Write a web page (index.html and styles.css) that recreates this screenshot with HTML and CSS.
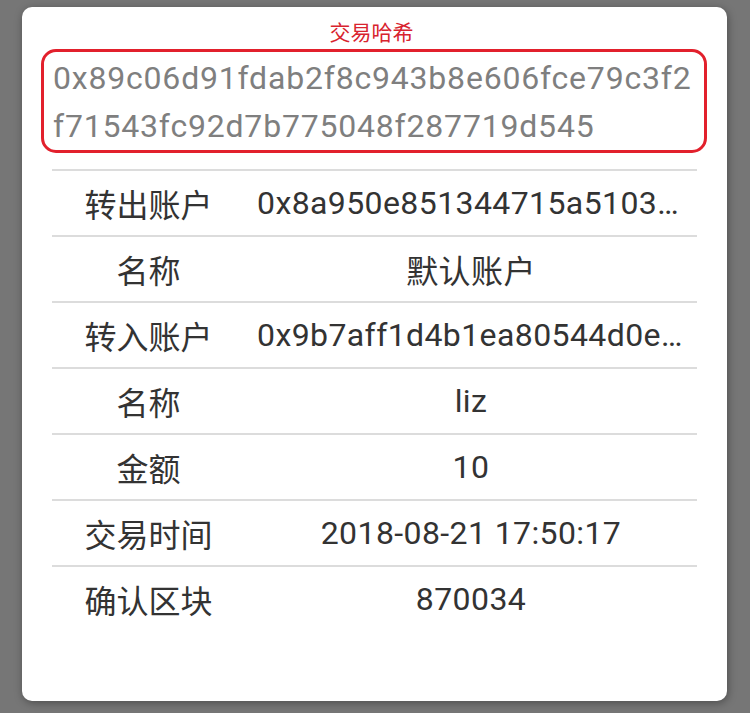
FILE: index.html
```html
<!DOCTYPE html>
<html lang="zh-CN">
<head>
<meta charset="utf-8">
<title>交易详情</title>
<link rel="stylesheet" href="styles.css">
</head>
<body>
<div class="card">
  <div class="title">交易哈希</div>
  <div class="hash">0x89c06d91fdab2f8c943b8e606fce79c3f2f71543fc92d7b775048f287719d545</div>
  <div class="rows">
    <div class="row"><div class="label">转出账户</div><div class="value">0x8a950e851344715a5103c4ff2a7e90b3e1d7c2a6</div></div>
    <div class="row"><div class="label">名称</div><div class="value">默认账户</div></div>
    <div class="row"><div class="label">转入账户</div><div class="value">0x9b7aff1d4b1ea80544d0e3c7a1f2b6d84e9a0c13</div></div>
    <div class="row"><div class="label">名称</div><div class="value">liz</div></div>
    <div class="row"><div class="label">金额</div><div class="value">10</div></div>
    <div class="row"><div class="label">交易时间</div><div class="value">2018-08-21 17:50:17</div></div>
    <div class="row"><div class="label">确认区块</div><div class="value">870034</div></div>
  </div>
</div>
</body>
</html>
```
FILE: styles.css
```css
html, body {
  margin: 0;
  padding: 0;
}
body {
  width: 750px;
  height: 713px;
  background: #767676;
  font-family: Roboto, "Noto Sans CJK SC", sans-serif;
  overflow: hidden;
}
.card {
  margin: 7px 0 0 22px;
  width: 705px;
  height: 694px;
  box-sizing: border-box;
  padding: 11px 30px 0 30px;
  background: #ffffff;
  border-radius: 10px;
  box-shadow: 1px 2px 8px rgba(0, 0, 0, 0.35);
}
.title {
  height: 30px;
  line-height: 30px;
  text-align: center;
  font-size: 21px;
  color: #d8232e;
  padding-right: 6px;
}
.hash {
  margin: 1px -10px 0 -11px;
  border: 3px solid #e2202c;
  border-radius: 15px;
  padding: 2px 8px 0 9px;
  font-size: 32px;
  line-height: 48px;
  letter-spacing: 0.8px;
  color: #7f7f7f;
  word-break: break-all;
}
.rows {
  margin-top: 16px;
}
.row {
  display: flex;
  height: 66px;
  box-sizing: border-box;
  border-top: 2px solid #dcdcdc;
  align-items: center;
  font-size: 32px;
  color: #333333;
}
.label {
  flex: 0 0 193px;
  text-align: center;
}
.value {
  flex: 1;
  min-width: 0;
  padding: 0 12px;
  text-align: center;
  white-space: nowrap;
  overflow: hidden;
  text-overflow: ellipsis;
  letter-spacing: 0.4px;
}
```
